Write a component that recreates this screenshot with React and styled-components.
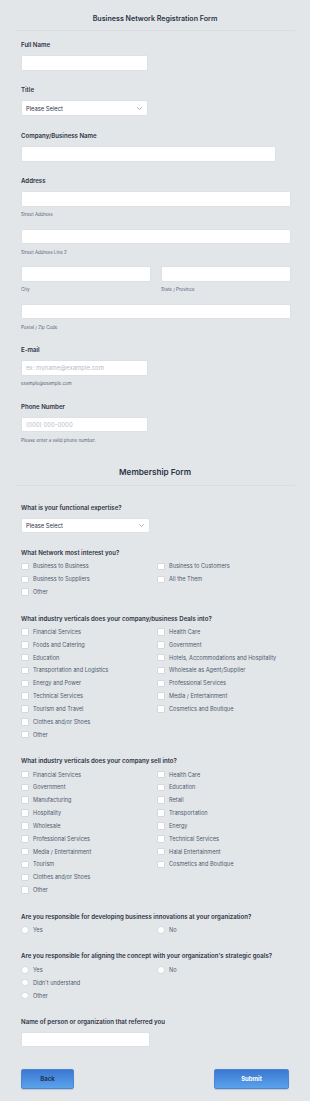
import React from 'react';
import styled, { createGlobalStyle } from 'styled-components';

const GlobalStyle = createGlobalStyle`
    html, body {
        margin: 0;
        padding: 0;
        background: #e3e6e8;
    }
    body {
        font-family: "Inter", "Noto Sans", sans-serif;
        color: #2c3345;
    }
    * {
        box-sizing: border-box;
    }
`;

const Page = styled.main`
    width: 310px;
    padding-bottom: 12px;
`;

const Header = styled.header`
    margin: 0 15px;
    padding: ${p => p.$top}px 0 ${p => p.$bottom}px;
    border-bottom: 1px solid #d9dde1;
    text-align: center;
`;

const Title = styled.h1`
    margin: 0;
    font-size: ${p => p.$size}px;
    line-height: ${p => p.$lh}px;
    font-weight: 600;
    color: #2c3345;
`;

const Body = styled.div`
    display: flex;
    flex-direction: column;
    gap: ${p => p.$gap}px;
    padding: ${p => p.$top}px 19px 0 21px;
`;

const Field = styled.div`
    display: flex;
    flex-direction: column;
`;

const Label = styled.label`
    display: block;
    font-size: 6.1px;
    line-height: 9px;
    font-weight: 600;
    color: #2c3345;
    margin-bottom: ${p => p.$mb ?? 6}px;
    white-space: nowrap;
`;

const Input = styled.input`
    display: block;
    width: ${p => p.$w ? `${p.$w}px` : '100%'};
    height: ${p => p.$h ?? 16}px;
    margin: 0;
    padding: 0 4px;
    border: 1px solid #dde1e6;
    border-radius: 2px;
    background: #fff;
    font-family: inherit;
    font-size: 6px;
    color: #2c3345;
    outline: none;

    &::placeholder {
        color: #b6bcc8;
    }
`;

const SelectBox = styled.div`
    width: ${p => p.$w}px;
    height: ${p => p.$h ?? 16}px;
    display: flex;
    align-items: center;
    justify-content: space-between;
    padding: 0 5px 0 4px;
    border: 1px solid #dde1e6;
    border-radius: 2px;
    background: #fff;
    font-size: 5.8px;
    color: #2c3345;
`;

const Sub = styled.span`
    display: block;
    margin-top: 4.5px;
    font-size: 4.5px;
    line-height: 7px;
    color: #57647e;
`;

const AddressStack = styled.div`
    display: flex;
    flex-direction: column;
    gap: 10.5px;
`;

const SplitRow = styled.div`
    display: grid;
    grid-template-columns: 1fr 1fr;
    column-gap: 10px;
`;

const Columns = styled.div`
    display: grid;
    grid-template-columns: 136px 1fr;
`;

const OptionList = styled.div`
    display: flex;
    flex-direction: column;
`;

const Option = styled.div`
    height: 12.85px;
    display: flex;
    align-items: center;
    gap: 4.5px;
    font-size: 5.6px;
    color: #4e5a70;
    white-space: nowrap;
`;

const Box = styled.span`
    width: 7.5px;
    height: 7.5px;
    flex: none;
    background: #fff;
    border: 0.5px solid #d3d8df;
    border-radius: ${p => p.$round ? '50%' : '1px'};
`;

const Buttons = styled.div`
    display: flex;
    justify-content: space-between;
    padding: 21.5px 21px 0 21px;
`;

const Button = styled.button`
    width: ${p => p.$w}px;
    height: 20px;
    padding: 0;
    border: 1px solid #4a86d6;
    border-radius: 2px;
    background: linear-gradient(180deg, #3b78d1 0%, #5aa2ec 100%);
    box-shadow: 0 0.5px 1px rgba(0, 0, 0, 0.15);
    font-family: inherit;
    font-size: 6px;
    font-weight: 700;
    color: ${p => p.$dark ? '#243656' : '#ffffff'};
    cursor: pointer;
`;

const Chevron = () => (
    <svg width="5" height="3" viewBox="0 0 10 6" fill="none">
        <path d="M1 1l4 4 4-4" stroke="#8a94a6" strokeWidth="1.4" strokeLinecap="round" strokeLinejoin="round" />
    </svg>
);

const Choices = ({ left, right, round }) => (
    <Columns>
        {[left, right].map((col, i) => (
            <OptionList key={i}>
                {col.map(text => (
                    <Option key={text}>
                        <Box $round={round} />
                        {text}
                    </Option>
                ))}
            </OptionList>
        ))}
    </Columns>
);

const AddressPart = ({ sub }) => (
    <div>
        <Input $h={15.5} />
        <Sub>{sub}</Sub>
    </div>
);

const dealsLeft = ['Financial Services', 'Foods and Catering', 'Education', 'Transportation and Logistics', 'Energy and Power', 'Technical Services', 'Tourism and Travel', 'Clothes and/or Shoes', 'Other'];
const dealsRight = ['Health Care', 'Government', 'Hotels, Accommodations and Hospitality', 'Wholesale as Agent/Supplier', 'Professional Services', 'Media / Entertainment', 'Cosmetics and Boutique'];
const sellLeft = ['Financial Services', 'Government', 'Manufacturing', 'Hospitality', 'Wholesale', 'Professional Services', 'Media / Entertainment', 'Tourism', 'Clothes and/or Shoes', 'Other'];
const sellRight = ['Health Care', 'Education', 'Retail', 'Transportation', 'Energy', 'Technical Services', 'Halal Entertainment', 'Cosmetics and Boutique'];

export default function App() {
    return (
        <Page>
            <GlobalStyle />
            <Header $top={14} $bottom={6}>
                <Title $size={7.1} $lh={10}>Business Network Registration Form</Title>
            </Header>
            <Body $top={8.5} $gap={14.5}>
                <Field>
                    <Label>Full Name</Label>
                    <Input $w={127} />
                </Field>
                <Field>
                    <Label>Title</Label>
                    <SelectBox $w={127}>Please Select<Chevron /></SelectBox>
                </Field>
                <Field>
                    <Label>Company/Business Name</Label>
                    <Input $w={255} />
                </Field>
                <Field>
                    <Label>Address</Label>
                    <AddressStack>
                        <AddressPart sub="Street Address" />
                        <AddressPart sub="Street Address Line 2" />
                        <SplitRow>
                            <AddressPart sub="City" />
                            <AddressPart sub="State / Province" />
                        </SplitRow>
                        <AddressPart sub="Postal / Zip Code" />
                    </AddressStack>
                </Field>
                <Field>
                    <Label>E-mail</Label>
                    <Input $w={127} $h={15.5} placeholder="ex: myname@example.com" />
                    <Sub>example@example.com</Sub>
                </Field>
                <Field>
                    <Label>Phone Number</Label>
                    <Input $w={127} $h={15.5} placeholder="(000) 000-0000" />
                    <Sub>Please enter a valid phone number.</Sub>
                </Field>
            </Body>

            <Header $top={23} $bottom={7}>
                <Title $size={8.2} $lh={11}>Membership Form</Title>
            </Header>
            <Body $top={17} $gap={15}>
                <Field>
                    <Label>What is your functional expertise?</Label>
                    <SelectBox $w={129} $h={15.5}>Please Select<Chevron /></SelectBox>
                </Field>
                <Field>
                    <Label $mb={3}>What Network most interest you?</Label>
                    <Choices
                        left={['Business to Business', 'Business to Suppliers', 'Other']}
                        right={['Business to Customers', 'All the Them']}
                    />
                </Field>
                <Field>
                    <Label $mb={3}>What industry verticals does your company/business Deals into?</Label>
                    <Choices left={dealsLeft} right={dealsRight} />
                </Field>
                <Field>
                    <Label $mb={3}>What industry verticals does your company sell into?</Label>
                    <Choices left={sellLeft} right={sellRight} />
                </Field>
                <Field>
                    <Label $mb={3}>Are you responsible for developing business innovations at your organization?</Label>
                    <Choices round left={['Yes']} right={['No']} />
                </Field>
                <Field>
                    <Label $mb={3}>Are you responsible for aligning the concept with your organization's strategic goals?</Label>
                    <Choices round left={['Yes', "Didn't understand", 'Other']} right={['No']} />
                </Field>
                <Field>
                    <Label>Name of person or organization that referred you</Label>
                    <Input $w={129} $h={15.5} />
                </Field>
            </Body>
            <Buttons>
                <Button $w={53} $dark>Back</Button>
                <Button $w={75}>Submit</Button>
            </Buttons>
        </Page>
    );
}
